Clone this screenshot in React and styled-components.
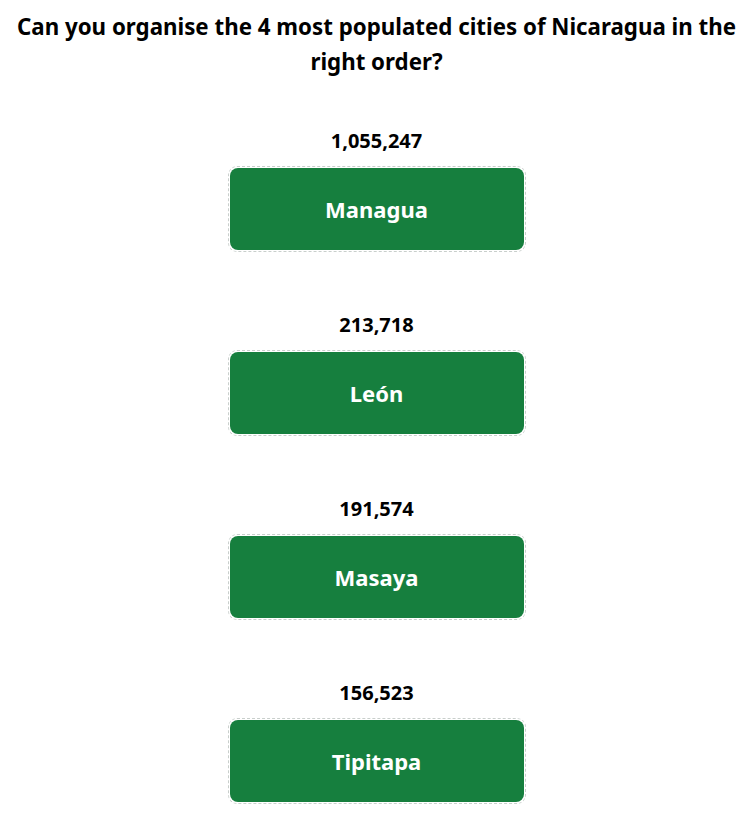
import React from "react";
import styled, { createGlobalStyle } from "styled-components";

const GlobalStyle = createGlobalStyle`
  body {
    margin: 0;
    background: #ffffff;
    font-family: "Noto Sans", "Open Sans", Arial, sans-serif;
  }
`;

const Page = styled.div`
  display: flex;
  flex-direction: column;
  align-items: center;
  padding: 9px 6px 20px;
`;

const Title = styled.h2`
  margin: 0 0 50px;
  font-size: 22.3px;
  line-height: 35px;
  font-weight: 700;
  text-align: center;
  color: #000;
`;

const List = styled.div`
  display: flex;
  flex-direction: column;
  align-items: center;
  gap: 61px;
`;

const Item = styled.div`
  display: flex;
  flex-direction: column;
  align-items: center;
`;

const Population = styled.div`
  font-size: 20px;
  line-height: 24px;
  font-weight: 700;
  color: #000;
  margin-bottom: 13px;
`;

const Slot = styled.div`
  width: 294px;
  height: 82px;
  padding: 1px;
  border: 1px dashed #c9cfcc;
  border-radius: 9px;
`;

const CityCard = styled.div`
  height: 100%;
  display: flex;
  align-items: center;
  justify-content: center;
  background: #167f3e;
  border-radius: 8px;
  color: #fff;
  font-size: 22px;
  font-weight: 700;
`;

const cities = [
  { name: "Managua", population: "1,055,247" },
  { name: "León", population: "213,718" },
  { name: "Masaya", population: "191,574" },
  { name: "Tipitapa", population: "156,523" },
];

const App = () => {
  return (
    <>
      <GlobalStyle />
      <Page>
        <Title>
          Can you organise the 4 most populated cities of Nicaragua in the
          right order?
        </Title>
        <List>
          {cities.map((city) => (
            <Item key={city.name}>
              <Population>{city.population}</Population>
              <Slot>
                <CityCard>{city.name}</CityCard>
              </Slot>
            </Item>
          ))}
        </List>
      </Page>
    </>
  );
};

export default App;
